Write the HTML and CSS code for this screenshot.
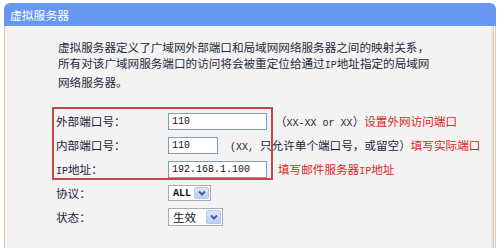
FILE: index.html
```html
<!DOCTYPE html>
<html lang="zh-CN">
<head>
    <meta charset="UTF-8">
    <title>虚拟服务器</title>
    <link rel="stylesheet" href="styles.css">
</head>
<body>
    <div class="panel">
        <div class="panel-head">虚拟服务器</div>
        <div class="panel-body">
            <p class="intro">虚拟服务器定义了广域网外部端口和局域网网络服务器之间的映射关系，<br>所有对该广域网服务端口的访问将会被重定位给通过<span class="mono">IP</span>地址指定的局域网<br>网络服务器。</p>

            <div class="form">
                <div class="mark"></div>
                <div class="row">
                    <span class="label">外部端口号：</span>
                    <span class="field wide">110</span>
                    <span class="hint hint-1">（<span class="mono">XX-XX or XX</span>）<span class="note">设置外网访问端口</span></span>
                </div>
                <div class="row">
                    <span class="label">内部端口号：</span>
                    <span class="field narrow">110</span>
                    <span class="hint hint-2"><span class="mono">(XX, </span>只允许单个端口号，或留空）<span class="note">填写实际端口</span></span>
                </div>
                <div class="row">
                    <span class="label"><span class="mono">IP</span>地址：</span>
                    <span class="field wide">192.168.1.100</span>
                    <span class="hint hint-3"><span class="note">填写邮件服务器<span class="mono">IP</span>地址</span></span>
                </div>
                <div class="row">
                    <span class="label">协议：</span>
                    <span class="select select-proto"><span class="select-text mono">ALL</span><span class="select-btn"><svg viewBox="0 0 8 6"><path d="M1 1.5l3 3 3-3"/></svg></span></span>
                </div>
                <div class="row">
                    <span class="label">状态：</span>
                    <span class="select select-state"><span class="select-text">生效</span><span class="select-btn"><svg viewBox="0 0 8 6"><path d="M1 1.5l3 3 3-3"/></svg></span></span>
                </div>
            </div>
        </div>
    </div>
</body>
</html>
```

FILE: styles.css
```css
body {
    margin: 0;
    background: #ffffff;
    font-family: "Noto Sans CJK SC", sans-serif;
    font-size: 11.6px;
    color: #1e2438;
    overflow: hidden;
}
.mono {
    font-family: "Liberation Mono", "Noto Sans CJK SC", monospace;
    font-size: 10px;
}
.panel {
    margin: 3px 0 0 4px;
    width: 492px;
}
.panel-head {
    height: 23px;
    line-height: 23px;
    padding-left: 6px;
    background: #6897f2;
    border-radius: 6px 6px 0 0;
    color: #ffffff;
    font-size: 11.8px;
}
.panel-body {
    height: 209px;
    padding: 13px 0 0 53px;
    background: #f3f3f3;
    border-left: 1px solid #e3c59a;
    border-right: 3px double #e6cba4;
    box-shadow: inset -2px 0 0 #e6e4f0;
}
.intro {
    margin: 0;
    line-height: 16px;
    color: #262a3a;
}
.form {
    position: relative;
    margin: 19px 0 0 -2px;
}
/* red annotation frame drawn over the first three rows */
.mark {
    position: absolute;
    left: -4px;
    top: -2px;
    width: 221px;
    height: 73px;
    box-sizing: border-box;
    border: 2px solid #bf4a4a;
}
.row {
    display: flex;
    align-items: center;
    height: 24px;
    white-space: nowrap;
}
.label {
    width: 112px;
    flex: none;
}
.field {
    box-sizing: border-box;
    height: 17px;
    line-height: 15px;
    padding-left: 3px;
    background: #ffffff;
    border: 1px solid #7f9db9;
    font-family: "Liberation Mono", monospace;
    font-size: 10px;
    color: #111;
}
.wide {
    width: 99px;
}
.narrow {
    width: 50px;
}
.hint {
    color: #1e2438;
}
.hint-1 {
    margin-left: 8px;
}
.hint-2 {
    margin-left: 12px;
}
.hint-3 {
    margin-left: 11px;
}
.note {
    color: #e0241c;
}
.select {
    display: flex;
    align-items: center;
    box-sizing: border-box;
    background: #ffffff;
    border: 1px solid #a5acb5;
    padding: 1px;
}
.select-proto {
    width: 43px;
    height: 16px;
}
.select-state {
    width: 55px;
    height: 18px;
}
.select-text {
    flex: 1;
    padding-left: 3px;
    color: #111;
}
.select-proto .select-text {
    font-weight: bold;
}
.select-btn {
    display: flex;
    align-items: center;
    justify-content: center;
    width: 15px;
    height: 100%;
    box-sizing: border-box;
    background: linear-gradient(#dbe6fd, #bacdf6);
    border: 1px solid #b4c7f0;
    border-radius: 2px;
}
.select-btn svg {
    width: 8px;
    height: 6px;
    fill: none;
    stroke: #4a5f8c;
    stroke-width: 2;
}
```
